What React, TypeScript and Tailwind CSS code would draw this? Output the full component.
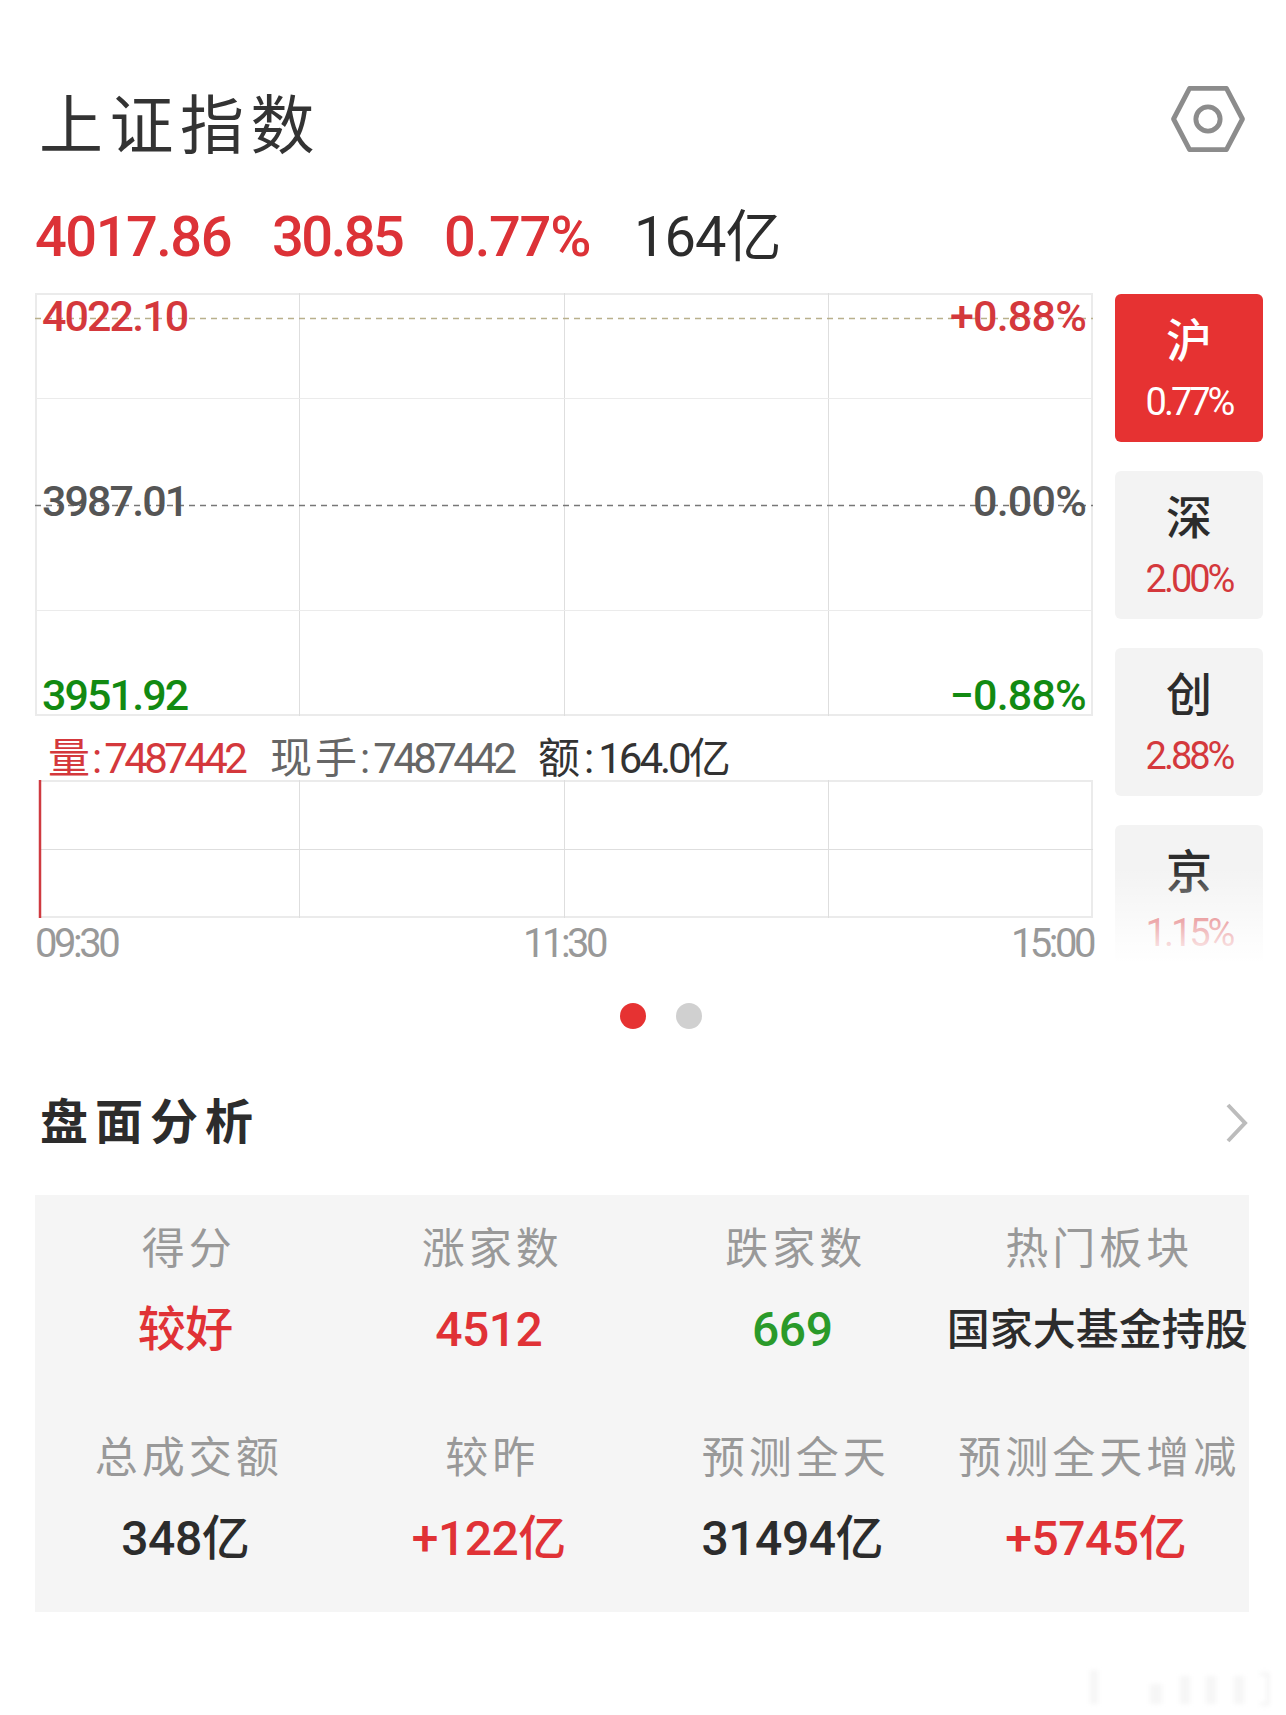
const cjk = "font-['Roboto','Noto_Sans_CJK_SC',sans-serif]";

const tabs = [
  { name: "沪", pct: "0.77%", active: true },
  { name: "深", pct: "2.00%" },
  { name: "创", pct: "2.88%" },
  { name: "京", pct: "1.15%" },
];

const cells = [
  { label: "得分", value: "较好", color: "text-[#e03236]", bold: true },
  { label: "涨家数", value: "4512", color: "text-[#e03236]" },
  { label: "跌家数", value: "669", color: "text-[#2a9a2a]" },
  { label: "热门板块", value: "国家大基金持股", color: "text-[#2c2c2c]", small: true },
  { label: "总成交额", value: "348亿", color: "text-[#2c2c2c]" },
  { label: "较昨", value: "+122亿", color: "text-[#e03236]" },
  { label: "预测全天", value: "31494亿", color: "text-[#2c2c2c]" },
  { label: "预测全天增减", value: "+5745亿", color: "text-[#e03236]" },
];

function PriceChart() {
  return (
    <div className="relative h-[423px] w-[1058px]">
      <svg className="absolute inset-0" width="1058" height="423">
        <rect x="1" y="1" width="1056" height="421" fill="none" stroke="#ebebeb" strokeWidth="2" />
        <path d="M264.5 0V423M529.5 0V423M793.5 0V423" stroke="#dedede" />
        <path d="M0 105.5H1058M0 317.5H1058" stroke="#ebebeb" />
        <path d="M0 25.5H1058" stroke="#b9b08c" strokeWidth="1.5" strokeDasharray="6 5" />
        <path d="M0 212.5H1058" stroke="#777" strokeWidth="1.5" strokeDasharray="6 5" />
      </svg>
      <span className="absolute left-[7px] -top-[1px] text-[43px] font-medium leading-[48px] tracking-[-1.9px] text-[#d4383c]">4022.10</span>
      <span className="absolute right-[7px] -top-[1px] text-[43px] font-medium leading-[48px] tracking-[-0.8px] text-[#d4383c]">+0.88%</span>
      <span className="absolute left-[7px] top-[184px] text-[43px] font-medium leading-[48px] tracking-[-1.9px] text-[#555555]">3987.01</span>
      <span className="absolute right-[7px] top-[184px] text-[43px] font-medium leading-[48px] tracking-[-0.8px] text-[#555555]">0.00%</span>
      <span className="absolute left-[7px] top-[378px] text-[43px] font-medium leading-[48px] tracking-[-1.9px] text-[#128a12]">3951.92</span>
      <span className="absolute right-[7px] top-[378px] text-[43px] font-medium leading-[48px] tracking-[-0.8px] text-[#128a12]">−0.88%</span>
    </div>
  );
}

function VolumeChart() {
  return (
    <svg className="block" width="1058" height="138">
      <path d="M5 1H1057V137H5" fill="none" stroke="#ebebeb" strokeWidth="2" />
      <path d="M264.5 0V138M529.5 0V138M793.5 0V138" stroke="#dedede" />
      <path d="M5 69.5H1058" stroke="#dedede" />
      <path d="M5 0V138" stroke="#cf3a40" strokeWidth="2.5" />
    </svg>
  );
}

export default function App() {
  return (
    <div className={`h-[1715px] w-[1286px] overflow-hidden bg-white ${cjk}`}>
      <div className="flex h-[203px] flex-col pl-[36px] pt-[87px]">
        <div className="flex items-start justify-between pr-[40px]">
          <h1 className="pl-[3px] text-[64px] font-normal leading-[80px] tracking-[6.5px] text-[#333333]">上证指数</h1>
          <svg width="76" height="66" viewBox="0 0 76 68" className="-mt-[1px]" fill="none" stroke="#8c8c8c" strokeWidth="5" strokeLinejoin="round">
            <path d="M19 2.5H57L73.5 34L57 65.5H19L2.5 34Z" />
            <circle cx="38" cy="34" r="12.5" />
          </svg>
        </div>
      </div>

      <div className="flex h-[90px] items-start pl-[35px] text-[56px] font-medium leading-[68px] text-[#dc3237]">
        <span className="w-[237px] tracking-[-1.5px]">4017.86</span>
        <span className="w-[172px] tracking-[-2.5px]">30.85</span>
        <span className="w-[190px] tracking-[-1.2px]">0.77%</span>
        <span className="font-normal tracking-[-1px] text-[#2c2c2c]">164亿</span>
      </div>

      <div className="flex pl-[35px]">
        <div className="w-[1058px]">
          <PriceChart />
          <div className="flex h-[64px] items-start pl-[13px] pt-[8px] text-[42px] leading-[70px]">
            <span className="w-[222px] tracking-[-3.6px] text-[#d4383c]">
              <span className="tracking-[2px]">量:</span>7487442
            </span>
            <span className="w-[268px] tracking-[-3.6px] text-[#666666]">
              <span className="tracking-[3px]">现手:</span>7487442
            </span>
            <span className="tracking-[-3px] text-[#333333]">
              <span className="tracking-[4px]">额:</span>164.0亿
            </span>
          </div>
          <VolumeChart />
          <div className="flex justify-between pt-[1px] text-[40px] leading-[50px] tracking-[-3.5px] text-[#999999]">
            <span>09:30</span>
            <span>11:30</span>
            <span>15:00</span>
          </div>
        </div>
        <div className="relative ml-[22px] mt-[1px] flex h-[668px] w-[148px] flex-col gap-[29px] overflow-hidden">
          {tabs.map((t) => (
            <div key={t.name} className={`flex h-[148px] shrink-0 flex-col items-center rounded-[6px] pt-[16px] ${t.active ? "bg-[#e63232]" : "bg-[#f3f3f3]"}`}>
              <span className={`text-[46px] font-medium leading-[62px] ${t.active ? "text-white" : "text-[#2c2c2c]"}`}>{t.name}</span>
              <span className={`mt-[7px] text-[38px] leading-[46px] tracking-[-3px] ${t.active ? "text-white" : "text-[#d4383c]"}`}>{t.pct}</span>
            </div>
          ))}
          <div className="absolute inset-x-0 bottom-0 h-[95px] bg-gradient-to-b from-white/0 to-white" />
        </div>
      </div>

      <div className="flex h-[80px] items-center justify-center gap-[30px] pl-[35px] pt-[14px]">
        <span className="size-[26px] rounded-full bg-[#e63232]" />
        <span className="size-[26px] rounded-full bg-[#d0d0d0]" />
      </div>

      <div className="flex h-[146px] items-center justify-between pl-[40px] pr-[38px] pt-[2px]">
        <h2 className="text-[48px] font-bold leading-[60px] tracking-[7px] text-[#2c2c2c]">盘面分析</h2>
        <svg width="22" height="40" viewBox="0 0 22 40" fill="none" stroke="#bcbcbc" strokeWidth="4">
          <path d="M2 2L19 20L2 38" />
        </svg>
      </div>

      <div className="mx-[35px] grid h-[417px] w-[1214px] grid-cols-4 content-start gap-y-[68px] bg-[#f5f5f5] pt-[24px]">
        {cells.map((c) => (
          <div key={c.label} className="flex flex-col items-center">
            <span className="h-[60px] whitespace-nowrap pl-[4px] text-[43px] leading-[60px] tracking-[4px] text-[#999999]">{c.label}</span>
            <span className={`mt-[21px] h-[60px] whitespace-nowrap font-medium leading-[60px] ${c.small ? "text-[43px]" : "text-[48px] tracking-[-0.5px] pr-[3px]"} ${c.bold ? "font-bold" : ""} ${c.color}`}>{c.value}</span>
          </div>
        ))}
      </div>

      <div className="flex justify-end pr-[12px] pt-[58px]">
        <svg width="186" height="36" className="blur-[2px]" fill="#f6f6f6">
          <rect x="2" y="0" width="8" height="34" />
          <rect x="62" y="14" width="12" height="20" />
          <rect x="92" y="6" width="10" height="28" />
          <rect x="118" y="6" width="10" height="28" />
          <rect x="146" y="6" width="10" height="28" />
          <path d="M172 4H180V34H172" fill="none" stroke="#f4f4f4" strokeWidth="3" />
        </svg>
      </div>
    </div>
  );
}
